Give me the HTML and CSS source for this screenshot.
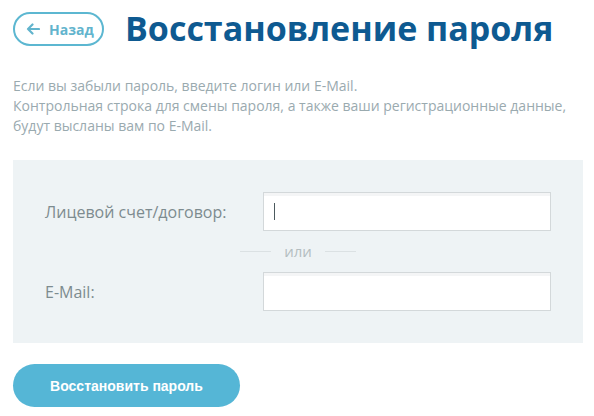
FILE: index.html
```html
<!DOCTYPE html>
<html lang="ru">
<head>
<meta charset="utf-8">
<link rel="stylesheet" href="styles.css">
</head>
<body>
<div class="page">
  <header class="head">
    <a class="back" href="#">
      <svg class="back-icon" width="14" height="12" viewBox="0 0 14 12"><path d="M13 6H2M6.5 1.5L2 6l4.5 4.5" fill="none" stroke="currentColor" stroke-width="2.2" stroke-linecap="round" stroke-linejoin="round"/></svg>
      <span>Назад</span>
    </a>
    <h1 class="title">Восстановление пароля</h1>
  </header>
  <p class="intro">Если вы забыли пароль, введите логин или E-Mail.<br>Контрольная строка для смены пароля, а также ваши регистрационные данные,<br>будут высланы вам по E-Mail.</p>
  <form class="panel">
    <div class="row">
      <label class="label">Лицевой счет/договор:</label>
      <div class="input"><span class="caret"></span></div>
    </div>
    <div class="divider"><span class="line"></span><span class="or">или</span><span class="line"></span></div>
    <div class="row">
      <label class="label">E-Mail:</label>
      <div class="input"></div>
    </div>
  </form>
  <button class="submit" type="button">Восстановить пароль</button>
</div>
</body>
</html>
```
FILE: styles.css
```css
html, body { margin: 0; padding: 0; background: #fff; }
body { font-family: "Open Sans", "Liberation Sans", sans-serif; }
.page { padding: 12px 11px 0 13px; }
.head { display: flex; align-items: center; gap: 21px; height: 34px; }
.back {
  box-sizing: border-box;
  display: flex; align-items: center; gap: 9px;
  width: 91px; height: 34px;
  padding-left: 11px;
  border: 2px solid #5cb7d1; border-radius: 17px;
  color: #62b4cd; text-decoration: none;
  font-weight: 700; font-size: 14px;
}
.back-icon { display: block; }
.title {
  margin: 0; font-size: 34px; font-weight: 700; color: #0e5a91;
  line-height: 34px; position: relative; top: -1px; white-space: nowrap;
}
.intro {
  margin: 30px 0 0; font-size: 14px; line-height: 20px; color: #9aaaaf;
}
.panel {
  margin-top: 24px; width: 570px; box-sizing: border-box;
  background: #eef3f5; padding: 32px 0 32px 32px;
}
.row { display: flex; align-items: center; height: 39px; }
.label { width: 218px; font-size: 16px; color: #7d8b8f; }
.input {
  box-sizing: border-box; width: 288px; height: 39px; background: #fff;
  border: 1px solid #d3d8da; box-shadow: inset 0 3px 0 #f4f5f6;
  display: flex; align-items: center; padding-left: 10px;
}
.caret { width: 1px; height: 17px; background: #4c5a5e; }
.divider { display: flex; align-items: center; height: 41px; padding-left: 195px; }
.line { width: 31px; height: 1px; background: #dbe1e3; }
.or { width: 54px; text-align: center; font-size: 15px; color: #b4bec1; margin-top: -2px; }
.submit {
  margin-top: 21px; width: 227px; height: 43px; border: 0; border-radius: 22px;
  background: #55b6d6; color: #fff; font-family: "Liberation Sans", Arial, sans-serif;
  font-weight: 700; font-size: 14px; padding: 0; display: block;
}
```
